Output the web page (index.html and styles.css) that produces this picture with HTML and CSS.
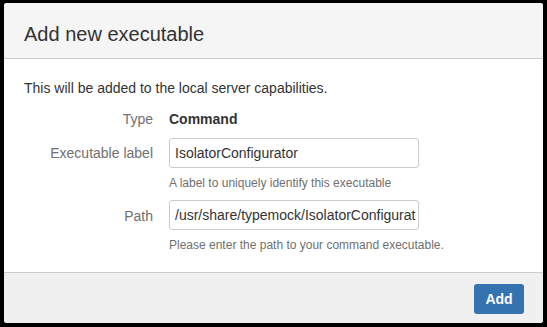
FILE: index.html
```html
<!DOCTYPE html>
<html lang="en">
<head>
    <meta charset="UTF-8">
    <title>Add new executable</title>
    <link rel="stylesheet" href="styles.css">
</head>
<body>

    <div class="dialog">
        <div class="dialog-header">
            <h2>Add new executable</h2>
        </div>

        <div class="dialog-body">
            <p class="intro">This will be added to the local server capabilities.</p>

            <div class="form">
                <span class="field-label">Type</span>
                <span class="field-value">Command</span>

                <label class="field-label" for="exe-label">Executable label</label>
                <div class="field">
                    <input type="text" id="exe-label" value="IsolatorConfigurator">
                    <div class="help">A label to uniquely identify this executable</div>
                </div>

                <label class="field-label" for="exe-path">Path</label>
                <div class="field">
                    <input type="text" id="exe-path" value="/usr/share/typemock/IsolatorConfigurator">
                    <div class="help">Please enter the path to your command executable.</div>
                </div>
            </div>
        </div>

        <div class="dialog-footer">
            <button class="btn">Add</button>
        </div>
    </div>

</body>
</html>
```
FILE: styles.css
```css
/* General Styles */
body {
    margin: 0;
    background: #000;
    font-family: "Liberation Sans", Arial, sans-serif;
    font-size: 14px;
    color: #333;
}

.dialog {
    margin: 3px 0 0 4px;
    width: 539px;
    height: 320px;
    background: #fff;
    border-radius: 3px;
    overflow: hidden;
    display: flex;
    flex-direction: column;
}

/* Header */
.dialog-header {
    box-sizing: border-box;
    height: 56px;
    padding: 19px 20px 0;
    background: #f5f5f5;
    border-bottom: 1px solid #ccc;
}

.dialog-header h2 {
    margin: 0;
    font-size: 20px;
    font-weight: normal;
    line-height: 24px;
    color: #333;
}

/* Body */
.dialog-body {
    flex: 1;
    padding: 19px 20px 0;
}

.intro {
    margin: 0 0 11px;
    line-height: 20px;
}

.form {
    display: grid;
    grid-template-columns: 129px 250px;
    column-gap: 16px;
    row-gap: 9px;
    align-items: start;
}

.field-label {
    text-align: right;
    color: #707070;
    line-height: 20px;
}

.form label.field-label {
    line-height: 30px;
}

.field-value {
    font-weight: bold;
    line-height: 20px;
}

.field input[type="text"] {
    box-sizing: border-box;
    display: block;
    width: 250px;
    height: 30px;
    margin: 0;
    padding: 0 2px 0 5px;
    border: 1px solid #ccc;
    border-radius: 3px;
    font-family: inherit;
    font-size: 14px;
    color: #333;
    background: #fff;
    outline: none;
}

.help {
    margin-top: 7px;
    font-size: 12px;
    line-height: 16px;
    color: #707070;
    white-space: nowrap;
}

.field + .field-label {
    margin-top: 1px;
}

/* Footer */
.dialog-footer {
    box-sizing: border-box;
    height: 51px;
    padding: 11px 19px 0;
    background: #f0f0f0;
    border-top: 1px solid #ccc;
    display: flex;
    justify-content: flex-end;
    align-items: flex-start;
}

.btn {
    width: 50px;
    height: 30px;
    padding: 0;
    border: none;
    border-radius: 3px;
    background: #3572b0;
    color: #fff;
    font-family: inherit;
    font-size: 14px;
    font-weight: bold;
    cursor: pointer;
}

.btn:hover {
    background: #205081;
}
```
